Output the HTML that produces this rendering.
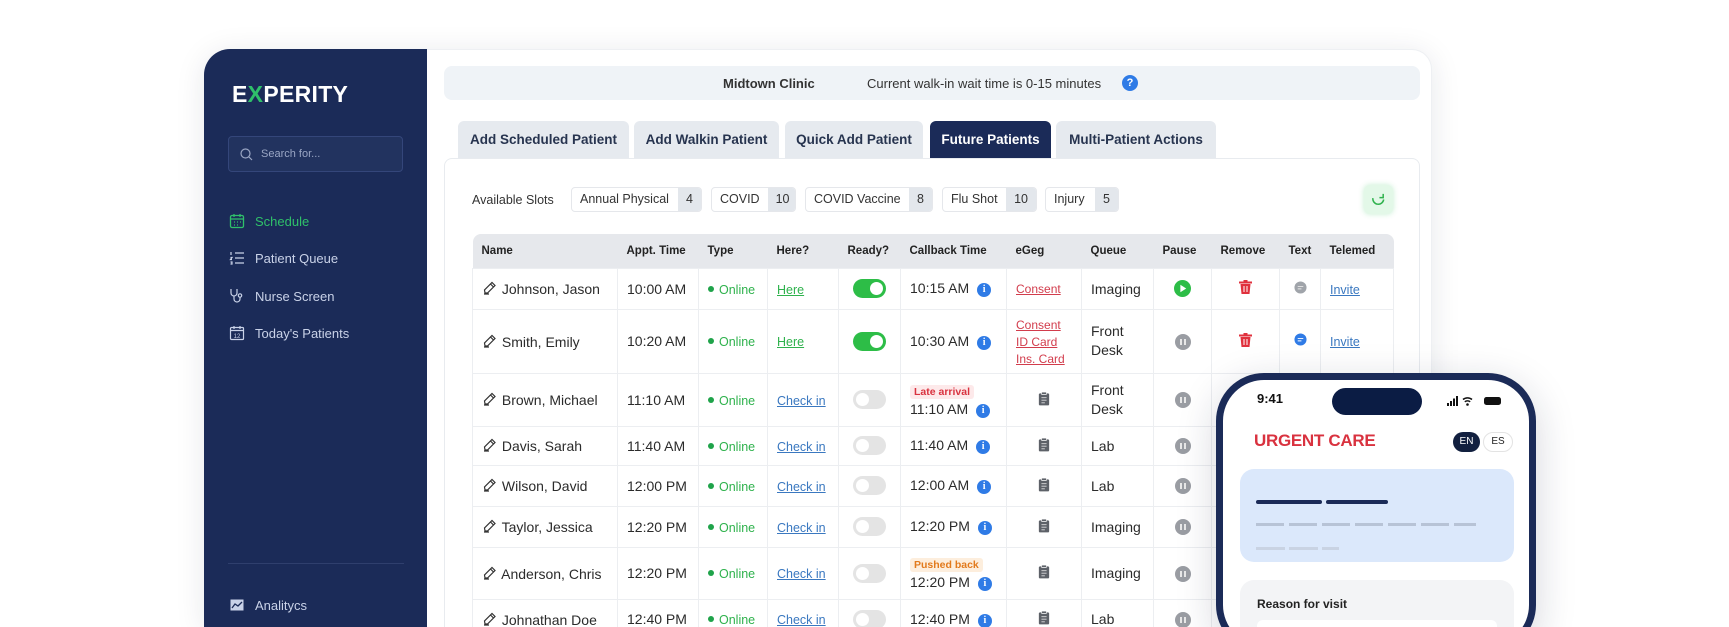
<!DOCTYPE html>
<html style="width:1729px;height:627px;overflow:hidden"><head><meta charset="utf-8">
<style>
*{box-sizing:border-box;margin:0;padding:0}
body{width:1729px;height:627px;overflow:hidden;background:#fff;font-family:"Liberation Sans",Arial,sans-serif;position:relative;color:#1f2937}
.abs{position:absolute}
#card{left:204px;top:49px;width:1228px;height:578px;background:#fff;border-radius:26px 20px 0 0;box-shadow:0 4px 30px rgba(20,30,60,.10);border:1px solid #eef0f3;border-bottom:none}
#side{left:204px;top:49px;width:223px;height:578px;background:#1b2b58;border-radius:26px 0 0 0}
.logo{left:232px;top:81px;font-size:23px;font-weight:bold;color:#fff;letter-spacing:.3px}
.logo span{color:#2fc06a}
.search{left:228px;top:136px;width:175px;height:36px;border:1px solid #34467a;background:#22335f;border-radius:4px;color:#9aa6c4;font-size:11px;padding:11px 0 0 32px}
.nav{left:229px;font-size:13px;color:#c9d2e8;display:flex;align-items:center;gap:10px}
.nav svg{width:16px;height:16px}
.bar{left:444px;top:66px;width:976px;height:34px;background:#eff3f7;border-radius:8px;font-size:13px;color:#333}
.tab{top:121px;height:38px;background:#e6eaef;border-radius:6px 6px 0 0;font-size:13.5px;font-weight:bold;color:#27344f;text-align:center;line-height:38px}
.tab.act{background:#1b2b58;color:#fff}
#panel{left:444px;top:158px;width:976px;height:469px;background:#fff;border:1px solid #e8ebef;border-bottom:none;border-radius:8px 8px 0 0}
.chip{top:187px;height:25px;border:1px solid #e5e7eb;border-radius:4px;font-size:12.5px;color:#333;display:flex;overflow:hidden;background:#fff}
.chip b{font-weight:normal;padding:0 8px;line-height:23px}
.chip i{font-style:normal;background:#e3e7ec;padding:0 8px;line-height:23px}
table{position:absolute;left:472px;top:234px;border-collapse:collapse;table-layout:fixed;width:921px;font-size:14px;color:#2b2b2b}
th{background:#e6e8ec;font-size:11.5px;font-weight:bold;text-align:left;padding:0 9px;height:34px;color:#222}
th:first-child{border-radius:8px 0 0 0}th:last-child{border-radius:0 8px 0 0}
td{border:1px solid #eceef1;padding:0 9px;vertical-align:middle;white-space:nowrap}
.onl{color:#2fb24d;font-size:12.5px}
.onl:before{content:"";display:inline-block;width:6px;height:6px;border-radius:50%;background:#1fa34a;margin-right:5px;vertical-align:2px}
.lg{color:#2fb24d;text-decoration:underline;font-size:12.5px}
.lb{color:#3a78c0;text-decoration:underline;font-size:12.5px}
.lr{color:#d23c4c;text-decoration:underline;font-size:12px;line-height:15px}
.tg{display:inline-block;width:33px;height:19px;border-radius:10px;background:#2dbd47;position:relative;vertical-align:middle}
.tg:after{content:"";position:absolute;right:3px;top:3px;width:13px;height:13px;border-radius:50%;background:#fff}
.tg.off{background:#e4e4e4}.tg.off:after{right:auto;left:3px}
.info{display:inline-block;width:14px;height:14px;border-radius:50%;background:#2f7be6;color:#fff;font-size:10px;font-weight:bold;text-align:center;line-height:14px;margin-left:8px;vertical-align:1px;font-family:"Liberation Serif",serif}
.pz{display:inline-block;width:16px;height:16px;border-radius:50%;background:#9a9da3;position:relative;vertical-align:middle}
.pz:before,.pz:after{content:"";position:absolute;top:5px;width:2px;height:6px;background:#e8e8e8}
.pz:before{left:5px}.pz:after{left:9px}
.badge{display:inline-block;font-size:10.5px;font-weight:bold;padding:1px 4px;border-radius:3px;margin-bottom:2px}
.c{text-align:center}
</style></head><body>
<div id="card" class="abs"></div>
<div id="side" class="abs"></div>
<div class="abs logo">E<span>X</span>PERITY</div>
<div class="abs search"><svg class="abs" style="left:11px;top:11px" width="13" height="13" viewBox="0 0 13 13"><circle cx="5.5" cy="5.5" r="4.5" fill="none" stroke="#9aa6c4" stroke-width="1.2"/><path d="M9 9l3 3" stroke="#9aa6c4" stroke-width="1.2"/></svg>Search for...</div>
<div class="abs nav" style="top:213px;color:#2fc06a"><svg viewBox="0 0 16 16"><rect x="1.5" y="2.5" width="13" height="12" rx="1.5" fill="none" stroke="#2fc06a" stroke-width="1.3"/><path d="M1.5 6h13M5 1v3M11 1v3" stroke="#2fc06a" stroke-width="1.3"/><path d="M5 9h1M8 9h1M11 9h1M5 12h1M8 12h1" stroke="#2fc06a" stroke-width="1.2"/></svg>Schedule</div>
<div class="abs nav" style="top:250px"><svg viewBox="0 0 16 16"><path d="M6 3h9M6 8h9M6 13h9M2 2v3M1.5 7.5h1.5l-1.5 2h1.5M1.5 12h1.5v2h-1.5" stroke="#c9d2e8" stroke-width="1.2" fill="none"/></svg>Patient Queue</div>
<div class="abs nav" style="top:288px"><svg viewBox="0 0 16 16"><path d="M2 1v4a3 3 0 006 0V1M5 8v3a3 3 0 006 0V9" stroke="#c9d2e8" stroke-width="1.2" fill="none"/><circle cx="11" cy="7.5" r="1.7" fill="none" stroke="#c9d2e8" stroke-width="1.2"/></svg>Nurse Screen</div>
<div class="abs nav" style="top:325px"><svg viewBox="0 0 16 16"><rect x="1.5" y="2.5" width="13" height="12" rx="1" fill="none" stroke="#c9d2e8" stroke-width="1.2"/><path d="M1.5 5.5h13M5 1v3M11 1v3" stroke="#c9d2e8" stroke-width="1.2"/><text x="8" y="13" font-size="6" fill="#c9d2e8" text-anchor="middle" font-family="Liberation Sans">12</text></svg>Today's Patients</div>
<div class="abs" style="left:228px;top:563px;width:176px;height:1px;background:#2f3f6d"></div>
<div class="abs nav" style="top:597px"><svg viewBox="0 0 16 16"><rect x="1.5" y="2.5" width="13" height="11" fill="#c9d2e8"/><path d="M3 11l3-4 3 2 4-4" stroke="#1b2b58" stroke-width="1.3" fill="none"/></svg>Analitycs</div>

<div class="abs bar"><span class="abs" style="left:279px;top:10px;font-weight:bold">Midtown Clinic</span><span class="abs" style="left:423px;top:10px">Current walk-in wait time is 0-15 minutes</span><span class="abs" style="left:678px;top:9px;width:16px;height:16px;border-radius:50%;background:#2f7be6;color:#fff;font-size:11px;font-weight:bold;text-align:center;line-height:16px">?</span></div>

<div class="abs tab" style="left:458px;width:171px">Add Scheduled Patient</div>
<div class="abs tab" style="left:634px;width:145px">Add Walkin Patient</div>
<div class="abs tab" style="left:785px;width:138px">Quick Add Patient</div>
<div class="abs tab act" style="left:930px;width:121px">Future Patients</div>
<div class="abs tab" style="left:1056px;width:160px">Multi-Patient Actions</div>
<div id="panel" class="abs"></div>

<div class="abs" style="left:472px;top:193px;font-size:12.5px;color:#333">Available Slots</div>
<div class="abs chip" style="left:571px;width:131px"><b>Annual Physical</b><i style="margin-left:auto">4</i></div>
<div class="abs chip" style="left:711px;width:85px"><b>COVID</b><i style="margin-left:auto">10</i></div>
<div class="abs chip" style="left:805px;width:128px"><b>COVID Vaccine</b><i style="margin-left:auto">8</i></div>
<div class="abs chip" style="left:942px;width:95px"><b>Flu Shot</b><i style="margin-left:auto">10</i></div>
<div class="abs chip" style="left:1045px;width:74px"><b>Injury</b><i style="margin-left:auto">5</i></div>
<div class="abs" style="left:1364px;top:185px;width:29px;height:29px;border-radius:6px;background:#e3f8e8;box-shadow:0 0 6px rgba(60,200,100,.3)"><svg style="margin:7px" width="15" height="15" viewBox="0 0 16 16"><path d="M13.5 8A5.5 5.5 0 112 6.5" fill="none" stroke="#2fb24d" stroke-width="1.6"/><path d="M13 2v4h-4" fill="none" stroke="#2fb24d" stroke-width="1.6"/></svg></div>

<svg width="0" height="0" style="position:absolute"><defs>
<symbol id="pen" viewBox="0 0 16 16"><path d="M2 14h5M3 13l-.5-3L10 2.5l3 3L5.5 13z M8.5 4l3 3" fill="none" stroke="#333" stroke-width="1.2"/></symbol>
<symbol id="clip" viewBox="0 0 14 16"><rect x="1" y="2" width="12" height="14" rx="1.5" fill="#5d6168"/><rect x="4" y="0.5" width="6" height="3" rx="1" fill="#5d6168" stroke="#fff" stroke-width=".8"/><path d="M4 7h6M4 10h6M4 13h4" stroke="#ddd" stroke-width="1"/></symbol>
</defs></svg>

<table>
<colgroup><col style="width:145px"><col style="width:81px"><col style="width:69px"><col style="width:71px"><col style="width:62px"><col style="width:106px"><col style="width:75px"><col style="width:72px"><col style="width:58px"><col style="width:68px"><col style="width:41px"><col style="width:73px"></colgroup>
<tr><th>Name</th><th>Appt. Time</th><th>Type</th><th>Here?</th><th>Ready?</th><th>Callback Time</th><th>eGeg</th><th>Queue</th><th>Pause</th><th>Remove</th><th>Text</th><th>Telemed</th></tr>
<tr style="height:41px"><td><svg width="16" height="16" style="vertical-align:-2px"><use href="#pen"/></svg> Johnson, Jason</td><td>10:00 AM</td><td><span class="onl">Online</span></td><td><span class="lg">Here</span></td><td class="c"><span class="tg"></span></td><td>10:15 AM<span class="info">i</span></td><td><span class="lr">Consent</span></td><td>Imaging</td><td class="c"><svg width="17" height="17" viewBox="0 0 16 16" style="vertical-align:middle"><circle cx="8" cy="8" r="8" fill="#2dbd47"/><path d="M6 4.5v7l5.5-3.5z" fill="#fff"/></svg></td><td class="c"><svg width="13" height="14" viewBox="0 0 13 14"><rect x="0" y="1.5" width="13" height="2" fill="#e0313d"/><rect x="4.5" y="0" width="4" height="2" fill="#e0313d"/><path d="M1.5 4h10l-1 10h-8z" fill="#e0313d"/><path d="M5 6v6M8 6v6" stroke="#fff" stroke-width="1"/></svg></td><td class="c"><svg width="13" height="13" viewBox="0 0 14 14"><circle cx="7" cy="7" r="6.5" fill="#a0a4aa"/><path d="M4 6h6M4 8.5h4" stroke="#e6e6e6" stroke-width="1"/></svg></td><td><span class="lb">Invite</span></td></tr>
<tr style="height:64px"><td><svg width="16" height="16" style="vertical-align:-2px"><use href="#pen"/></svg> Smith, Emily</td><td>10:20 AM</td><td><span class="onl">Online</span></td><td><span class="lg">Here</span></td><td class="c"><span class="tg"></span></td><td>10:30 AM<span class="info">i</span></td><td><span class="lr">Consent</span><br><span class="lr">ID Card</span><br><span class="lr">Ins. Card</span></td><td style="white-space:normal;line-height:19px">Front<br>Desk</td><td class="c"><span class="pz"></span></td><td class="c"><svg width="13" height="14" viewBox="0 0 13 14"><rect x="0" y="1.5" width="13" height="2" fill="#e0313d"/><rect x="4.5" y="0" width="4" height="2" fill="#e0313d"/><path d="M1.5 4h10l-1 10h-8z" fill="#e0313d"/><path d="M5 6v6M8 6v6" stroke="#fff" stroke-width="1"/></svg></td><td class="c"><svg width="13" height="13" viewBox="0 0 14 14"><circle cx="7" cy="7" r="6.5" fill="#2f7be6"/><path d="M4 6h6M4 8.5h4" stroke="#fff" stroke-width="1"/></svg></td><td><span class="lb">Invite</span></td></tr>
<tr style="height:53px"><td><svg width="16" height="16" style="vertical-align:-2px"><use href="#pen"/></svg> Brown, Michael</td><td>11:10 AM</td><td><span class="onl">Online</span></td><td><span class="lb">Check in</span></td><td class="c"><span class="tg off"></span></td><td><span class="badge" style="color:#d9323f;background:#fde9ea">Late arrival</span><br>11:10 AM<span class="info">i</span></td><td class="c"><svg width="12" height="15"><use href="#clip"/></svg></td><td style="line-height:19px">Front<br>Desk</td><td class="c"><span class="pz"></span></td><td></td><td></td><td></td></tr>
<tr style="height:39px"><td><svg width="16" height="16" style="vertical-align:-2px"><use href="#pen"/></svg> Davis, Sarah</td><td>11:40 AM</td><td><span class="onl">Online</span></td><td><span class="lb">Check in</span></td><td class="c"><span class="tg off"></span></td><td>11:40 AM<span class="info">i</span></td><td class="c"><svg width="12" height="15"><use href="#clip"/></svg></td><td>Lab</td><td class="c"><span class="pz"></span></td><td></td><td></td><td></td></tr>
<tr style="height:41px"><td><svg width="16" height="16" style="vertical-align:-2px"><use href="#pen"/></svg> Wilson, David</td><td>12:00 PM</td><td><span class="onl">Online</span></td><td><span class="lb">Check in</span></td><td class="c"><span class="tg off"></span></td><td>12:00 AM<span class="info">i</span></td><td class="c"><svg width="12" height="15"><use href="#clip"/></svg></td><td>Lab</td><td class="c"><span class="pz"></span></td><td></td><td></td><td></td></tr>
<tr style="height:41px"><td><svg width="16" height="16" style="vertical-align:-2px"><use href="#pen"/></svg> Taylor, Jessica</td><td>12:20 PM</td><td><span class="onl">Online</span></td><td><span class="lb">Check in</span></td><td class="c"><span class="tg off"></span></td><td>12:20 PM<span class="info">i</span></td><td class="c"><svg width="12" height="15"><use href="#clip"/></svg></td><td>Imaging</td><td class="c"><span class="pz"></span></td><td></td><td></td><td></td></tr>
<tr style="height:52px"><td><svg width="16" height="16" style="vertical-align:-2px"><use href="#pen"/></svg> Anderson, Chris</td><td>12:20 PM</td><td><span class="onl">Online</span></td><td><span class="lb">Check in</span></td><td class="c"><span class="tg off"></span></td><td><span class="badge" style="color:#e27a1c;background:#fdeedd">Pushed back</span><br>12:20 PM<span class="info">i</span></td><td class="c"><svg width="12" height="15"><use href="#clip"/></svg></td><td>Imaging</td><td class="c"><span class="pz"></span></td><td></td><td></td><td></td></tr>
<tr style="height:40px"><td><svg width="16" height="16" style="vertical-align:-2px"><use href="#pen"/></svg> Johnathan Doe</td><td>12:40 PM</td><td><span class="onl">Online</span></td><td><span class="lb">Check in</span></td><td class="c"><span class="tg off"></span></td><td>12:40 PM<span class="info">i</span></td><td class="c"><svg width="12" height="15"><use href="#clip"/></svg></td><td>Lab</td><td class="c"><span class="pz"></span></td><td></td><td></td><td></td></tr>
</table>

<!-- phone -->
<div class="abs" style="left:1216px;top:373px;width:320px;height:280px;border:7px solid #1b2b58;border-radius:48px;background:#fff;box-shadow:0 10px 40px rgba(20,30,60,.18)"></div>
<div class="abs" style="left:1257px;top:391px;font-size:13px;font-weight:bold;color:#111">9:41</div>
<div class="abs" style="left:1332px;top:388px;width:90px;height:27px;border-radius:14px;background:#0b1c44"></div>
<svg class="abs" style="left:1447px;top:395px" width="56" height="12" viewBox="0 0 56 12"><rect x="0" y="8" width="2" height="3" fill="#111"/><rect x="3" y="6" width="2" height="5" fill="#111"/><rect x="6" y="3.5" width="2" height="7.5" fill="#111"/><rect x="9" y="1" width="2" height="10" fill="#111"/><path d="M16 4.5a7 7 0 019 0M17.8 6.8a4.5 4.5 0 015.4 0" stroke="#111" stroke-width="1.5" fill="none"/><circle cx="20.5" cy="9.5" r="1.3" fill="#111"/><rect x="37" y="2" width="17" height="8" rx="2.5" fill="#111"/></svg>
<div class="abs" style="left:1254px;top:431px;font-size:17px;font-weight:bold;color:#d9323f;letter-spacing:-.3px">URGENT CARE</div>
<div class="abs" style="left:1453px;top:432px;width:27px;height:20px;border-radius:10px;background:#12203f;color:#fff;font-size:10px;text-align:center;line-height:20px">EN</div>
<div class="abs" style="left:1483px;top:432px;width:30px;height:20px;border-radius:10px;border:1px solid #e3e3e3;color:#222;font-size:10px;text-align:center;line-height:18px">ES</div>
<div class="abs" style="left:1240px;top:469px;width:274px;height:93px;border-radius:14px;background:#dbe8fb"></div>
<div class="abs" style="left:1256px;top:500px;width:66px;height:4px;border-radius:2px;background:#1b2b58"></div>
<div class="abs" style="left:1326px;top:500px;width:62px;height:4px;border-radius:2px;background:#1b2b58"></div>
<div class="abs" style="left:1256px;top:523px;width:220px;height:3px;background:repeating-linear-gradient(90deg,#b7c3d6 0 28px,transparent 28px 33px)"></div>
<div class="abs" style="left:1256px;top:547px;width:83px;height:3px;background:repeating-linear-gradient(90deg,#c9d3e3 0 29px,transparent 29px 33px)"></div>
<div class="abs" style="left:1240px;top:580px;width:274px;height:47px;border-radius:14px 14px 0 0;background:#f3f4f6"></div>
<div class="abs" style="left:1257px;top:597px;font-size:12px;font-weight:bold;color:#222">Reason for visit</div>
<div class="abs" style="left:1257px;top:620px;width:240px;height:7px;border-radius:6px 6px 0 0;background:#fff"></div>
</body></html>
